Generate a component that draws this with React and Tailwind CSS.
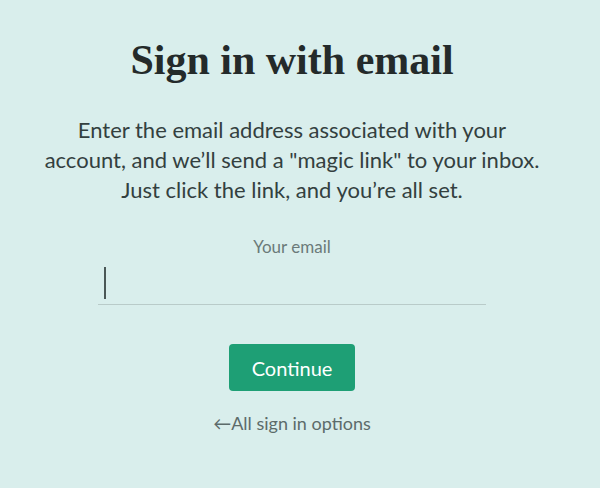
export default function App() {
  return (
    <div className="w-[600px] h-[488px] bg-[#d9eeec] overflow-hidden font-['Lato',sans-serif]">
      <div className="w-[584px] flex flex-col items-center pt-[36px]">
        <h1 className="text-[42px] leading-[48px] font-bold text-[#242a2a] font-['Liberation_Serif',serif]">
          Sign in with email
        </h1>
        <p className="mt-[31px] text-center text-[22px] leading-[30px] text-[#33403f] whitespace-nowrap">
          Enter the email address associated with your
          <br />
          account, and we’ll send a "magic link" to your inbox.
          <br />
          Just click the link, and you’re all set.
        </p>
        <div className="mt-[31px] text-[17px] leading-[22px] text-[#6b7a79]">Your email</div>
        <div className="w-[388px] h-[47px] border-b border-[#b9cbc9] flex items-center pl-[6px] pt-[4px]">
          <div className="w-[2px] h-[32px] bg-[#4a5756]"></div>
        </div>
        <button className="mt-[39px] w-[126px] h-[47px] rounded-[4px] bg-[#1e9f75] text-white text-[20px]">
          Continue
        </button>
        <div className="mt-[19px] text-[18px] leading-[26px] text-[#5c6b6a]">←All sign in options</div>
      </div>
    </div>
  );
}
